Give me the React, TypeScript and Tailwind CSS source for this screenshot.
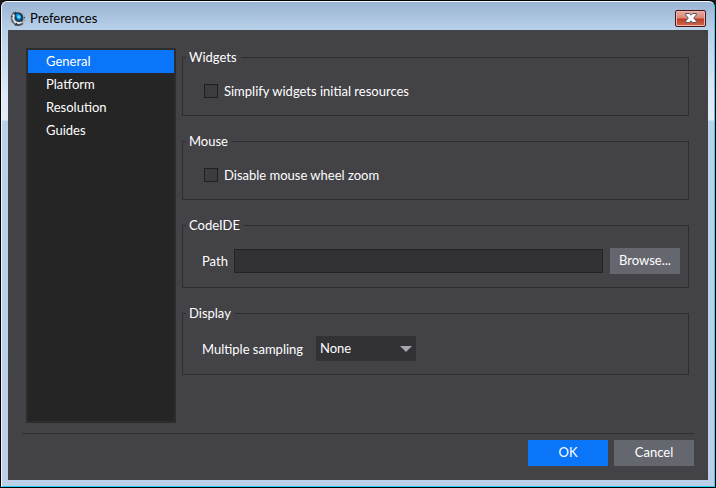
import { useState } from "react";
import type { ReactNode } from "react";

const sections = ["General", "Platform", "Resolution", "Guides"];

function Group({ title, children }: { title: string; children: ReactNode }) {
  return (
    <fieldset className="min-w-0 border border-[#2d2d30] pr-2 pl-[19px]">
      <legend className="-ml-4 h-[18px] pr-1 pl-[3px] leading-[18px]">{title}</legend>
      {children}
    </fieldset>
  );
}

function Check({ id, label }: { id: string; label: string }) {
  return (
    <div className="flex items-center gap-1.5 pt-4 pb-[15px] pl-0.5">
      <input
        id={id}
        type="checkbox"
        className="size-[14px] shrink-0 appearance-none border border-[#1f1f20] bg-[#3c3c3f] checked:bg-[#0a75f9]"
      />
      <label htmlFor={id} className="leading-[18px]">
        {label}
      </label>
    </div>
  );
}

function AppIcon() {
  return (
    <svg viewBox="0 0 16 16" className="size-4" aria-hidden="true">
      <circle cx="8" cy="8" r="6.800" fill="#2c3840" />
      <path d="M4 2Q1 5 1.500 9.500Q2.500 13 6 14.800" fill="none" stroke="#6d7780" strokeWidth="1.600" />
      <path d="M4 4.500Q2.500 8 4.200 11Q7.500 14.200 11.500 12.300" fill="none" stroke="#e4e8eb" strokeWidth="2" />
      <path d="M6 1.800Q9.500 .8 12.500 3.200Q14.800 6 13.900 10Q13.200 12 11.500 13" fill="none" stroke="#b4bcc3" strokeWidth="1.500" />
      <path d="M4.500 14.500Q9 16.300 13 13.500" fill="none" stroke="#3b4248" strokeWidth="1.500" />
      <path d="M1 6.500H2.500M1.800 11.500L3.500 10.800M6.500 14.500V12.800M14 7.500H15.200" fill="none" stroke="#343c43" strokeWidth="1" />
      <path d="M6 3C10 2 12.800 5.500 12.200 8.500C11.200 11.700 7.500 11.500 5.900 9.300C4.900 7.500 5 4.800 6 3Z" fill="#084a80" />
      <path d="M6.500 4C9.500 3.500 11.500 6 11.200 8C10 10.300 7.500 10 6.800 8C6.300 6.500 6 5.500 6.500 4Z" fill="#1499dc" />
      <circle cx="8.800" cy="6.800" r="1.600" fill="#5fdcff" />
    </svg>
  );
}

export default function App() {
  const [active, setActive] = useState("General");
  return (
    <div className="flex min-h-screen bg-[#1c1a1d] font-['Lato','Noto_Sans',sans-serif] text-[13px] text-white">
      <div className="flex flex-1 rounded-t-[7px] border border-black">
        <div className="flex flex-1 flex-col rounded-t-md border border-t-[#f4f8fc] border-r-[#35d3f3] border-b-[#22cfee] border-l-[#f4f8fc] bg-[linear-gradient(#99b4d2_0px,#b9d0e9_28px,#dce8f5_90px,#e3edf7_118px,#b9d1ea_119px,#bccfe9_100%)] px-1.5 pb-1.5">
          <header className="flex h-7 items-center justify-between px-0.5 pt-1">
            <div className="flex items-center gap-1">
              <AppIcon />
              <h1 className="leading-[18px] text-black">Preferences</h1>
            </div>
            <button
              type="button"
              aria-label="Close"
              className="flex h-[17px] w-[31px] items-center justify-center rounded-[2px] border border-[#431820] bg-[linear-gradient(#e9a99c_0%,#d98876_48%,#bc3a22_52%,#d4674e_100%)] shadow-[inset_0_0_0_1px_#eeb5a8]"
            >
              <svg viewBox="0 0 12 10" className="h-2.5 w-3" aria-hidden="true">
                <path
                  d="M.7 .5H4.500L6 2.200L7.500 .5H11.300V2L8.700 5L11.300 8V9.500H7.500L6 7.800L4.500 9.500H.7V8L3.300 5L.7 2Z"
                  fill="#fff"
                  stroke="#535666"
                  strokeWidth="1"
                />
              </svg>
            </button>
          </header>

          <div className="flex flex-1 flex-col bg-[#434247] px-3.5 pt-[18px] pb-3.5">
            <main className="flex flex-1 gap-1.5 pr-[5px] pb-2.5 pl-1">
              <nav className="w-[150px] shrink-0 border-2 border-[#2d2d30] bg-[#252525]">
                <ul>
                  {sections.map((name) => (
                    <li key={name}>
                      <button
                        type="button"
                        onClick={() => setActive(name)}
                        className={
                          name === active
                            ? "block h-[23px] w-full bg-[#0a75f9] pl-[18px] text-left leading-[23px]"
                            : "block h-[23px] w-full pl-[18px] text-left leading-[23px]"
                        }
                      >
                        {name}
                      </button>
                    </li>
                  ))}
                </ul>
              </nav>

              <div className="flex min-w-0 flex-1 flex-col gap-4">
                <Group title="Widgets">
                  <Check id="simplify" label="Simplify widgets initial resources" />
                </Group>
                <Group title="Mouse">
                  <Check id="wheel" label="Disable mouse wheel zoom" />
                </Group>
                <Group title="CodeIDE">
                  <div className="flex items-center pt-3.5 pb-[13px]">
                    <label htmlFor="path" className="w-8 leading-[18px]">
                      Path
                    </label>
                    <input
                      id="path"
                      type="text"
                      className="h-6 min-w-0 flex-1 border border-[#232325] bg-[#323135] px-1 outline-none"
                    />
                    <button type="button" className="ml-[7px] h-[26px] w-[70px] bg-[#65676e]">
                      Browse...
                    </button>
                  </div>
                </Group>
                <Group title="Display">
                  <div className="flex items-center pt-3.5 pb-[13px]">
                    <label htmlFor="sampling" className="w-[114px] leading-[18px]">
                      Multiple sampling
                    </label>
                    <div className="relative">
                      <select
                        id="sampling"
                        className="block h-[25px] w-[100px] appearance-none bg-[#323135] pl-1 outline-none"
                      >
                        <option>None</option>
                        <option>2x</option>
                        <option>4x</option>
                      </select>
                      <svg
                        viewBox="0 0 12 6"
                        className="pointer-events-none absolute top-2.5 right-1 h-1.5 w-3"
                        aria-hidden="true"
                      >
                        <path d="M0 0H12L6 6Z" fill="#a5a6ae" />
                      </svg>
                    </div>
                  </div>
                </Group>
              </div>
            </main>

            <footer className="flex justify-end gap-1.5 border-t border-[#2d2d30] pt-1.5">
              <button type="button" className="h-[26px] w-20 bg-[#0a75f9]">
                OK
              </button>
              <button type="button" className="h-[26px] w-20 bg-[#65676e]">
                Cancel
              </button>
            </footer>
          </div>
        </div>
      </div>
    </div>
  );
}
